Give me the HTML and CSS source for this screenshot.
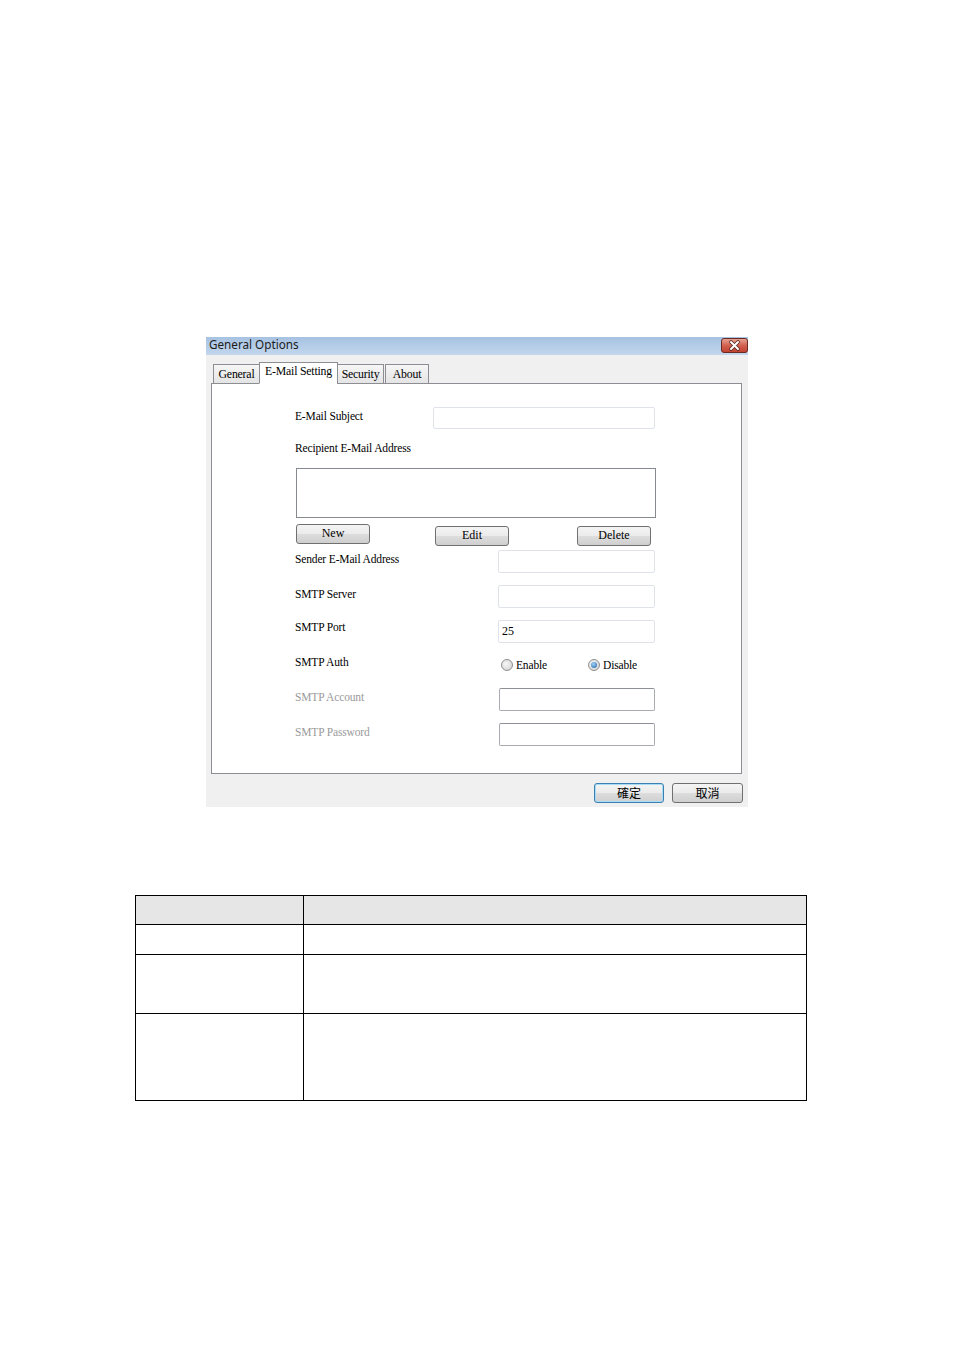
FILE: index.html
```html
<!DOCTYPE html>
<html>
<head>
<meta charset="utf-8">
<link rel="stylesheet" href="styles.css">
</head>
<body>
<div class="page">
  <div class="dialog">
    <div class="titlebar">
      <span class="title">General Options</span>
      <span class="close">
        <svg width="27" height="15" viewBox="0 0 27 15">
          <defs>
            <linearGradient id="cg" x1="0" y1="0" x2="0" y2="1">
              <stop offset="0" stop-color="#e8a898"/>
              <stop offset="0.5" stop-color="#d2604f"/>
              <stop offset="1" stop-color="#c0412f"/>
            </linearGradient>
          </defs>
          <rect x="0.5" y="0.5" width="26" height="14" rx="2.5" fill="url(#cg)" stroke="#6b2b24"/>
          <path d="M10 4 L17 11 M17 4 L10 11" stroke="#5a2a24" stroke-width="3.6" stroke-linecap="round"/>
          <path d="M10 4 L17 11 M17 4 L10 11" stroke="#ffffff" stroke-width="2" stroke-linecap="round"/>
        </svg>
      </span>
    </div>
    <div class="tabs">
      <span class="tab tab-general">General</span>
      <span class="tab active tab-email">E-Mail Setting</span>
      <span class="tab tab-security">Security</span>
      <span class="tab tab-about">About</span>
    </div>
    <div class="panel">
      <div class="row row-subject">
        <span class="lbl lbl-short">E-Mail Subject</span>
        <span class="input input-wide"></span>
      </div>
      <div class="lbl lbl-block">Recipient E-Mail Address</div>
      <div class="listbox"></div>
      <div class="btnrow">
        <span class="btn btn-new">New</span>
        <span class="btn btn-edit">Edit</span>
        <span class="btn btn-del">Delete</span>
      </div>
      <div class="row row-sender">
        <span class="lbl lbl-long">Sender E-Mail Address</span>
        <span class="input input-narrow"></span>
      </div>
      <div class="row row-gap">
        <span class="lbl lbl-long">SMTP Server</span>
        <span class="input input-narrow"></span>
      </div>
      <div class="row row-gap">
        <span class="lbl lbl-long lbl-port">SMTP Port</span>
        <span class="input input-narrow">25</span>
      </div>
      <div class="row row-auth">
        <span class="lbl lbl-long lbl-auth">SMTP Auth</span>
        <span class="radios">
          <span class="radio-item"><span class="radio"></span>Enable</span>
          <span class="radio-item"><span class="radio checked"></span>Disable</span>
        </span>
      </div>
      <div class="row row-acct">
        <span class="lbl lbl-long lbl-dis">SMTP Account</span>
        <span class="input input-narrow input-dark input-acct"></span>
      </div>
      <div class="row row-gap">
        <span class="lbl lbl-long lbl-dis">SMTP Password</span>
        <span class="input input-narrow input-dark input-acct"></span>
      </div>
    </div>
    <div class="footer">
      <span class="dbtn dbtn-ok">確定</span>
      <span class="dbtn">取消</span>
    </div>
  </div>

  <div class="tbl">
    <div class="cell head"></div><div class="cell head"></div>
    <div class="cell r1"></div><div class="cell r1"></div>
    <div class="cell r2"></div><div class="cell r2"></div>
    <div class="cell r3"></div><div class="cell r3"></div>
  </div>
</div>
</body>
</html>
```

FILE: styles.css
```css
html, body {
  margin: 0;
  padding: 0;
  background: #ffffff;
}

.page {
  padding-top: 337px;
  width: 955px;
}

.dialog {
  margin-left: 206px;
  width: 542px;
  height: 470px;
  background: #f0f0f0;
  display: flex;
  flex-direction: column;
}

.titlebar {
  height: 18px;
  background: linear-gradient(#a6c2e2, #c3d7ed);
  display: flex;
  align-items: flex-start;
  justify-content: space-between;
  padding-left: 3px;
}

.title {
  font-family: "Noto Sans", "Open Sans", sans-serif;
  font-size: 11.7px;
  color: #1b1b1b;
  line-height: 15px;
}

.close {
  display: flex;
  margin-top: 1px;
}

.tabs {
  height: 29px;
  display: flex;
  align-items: flex-end;
  padding-left: 7px;
  position: relative;
  z-index: 1;
  margin-bottom: -1px;
}

.tab {
  box-sizing: border-box;
  font-family: "Liberation Serif", "Times New Roman", serif;
  font-size: 11.8px;
  letter-spacing: -0.2px;
  color: #000;
  height: 20px;
  line-height: 19px;
  text-align: center;
  border: 1px solid #8c8e94;
  background: linear-gradient(#f6f6f6, #e4e4e4);
  margin-right: -1px;
  white-space: nowrap;
}

.tab-general { width: 47px; }
.tab-email { width: 79px; }
.tab-security { width: 47px; margin-right: 1px; }
.tab-about { width: 44px; }

.tab.active {
  height: 22px;
  line-height: 17px;
  background: #ffffff;
  border-bottom-color: #ffffff;
}

.panel {
  box-sizing: border-box;
  margin-left: 5px;
  width: 531px;
  height: 391px;
  border: 1px solid #8c8e94;
  background: #ffffff;
  padding-top: 23px;
  padding-left: 83px;
  display: flex;
  flex-direction: column;
  align-items: flex-start;
}

.lbl {
  font-family: "Liberation Serif", "Times New Roman", serif;
  font-size: 11.5px;
  letter-spacing: -0.15px;
  line-height: 14px;
  color: #000;
  white-space: nowrap;
}

.lbl-dis {
  color: #9a9a9a;
}

.row {
  display: flex;
  align-items: flex-start;
}

.row-subject {
  height: 22px;
}

.lbl-short {
  width: 138px;
  padding-top: 2px;
}

.lbl-long {
  width: 203px;
  padding-top: 2px;
}

.lbl-port {
  padding-top: 0;
}

.lbl-auth {
  padding-top: 0;
}

.input {
  box-sizing: border-box;
  height: 22px;
  border: 1px solid #dfe3e9;
  border-radius: 2px;
  background: #fff;
  font-family: "Liberation Serif", "Times New Roman", serif;
  font-size: 12px;
  line-height: 20px;
  padding-left: 3px;
  color: #000;
}

.input-wide {
  width: 222px;
}

.input-narrow {
  width: 157px;
  height: 23px;
}

.input-acct {
  margin-left: 1px;
  width: 156px;
}

.input-dark {
  border-color: #a9abb0;
  border-top-color: #8d9096;
}

.lbl-block {
  margin-top: 12px;
}

.listbox {
  margin-top: 13px;
  margin-left: 1px;
  width: 360px;
  height: 50px;
  box-sizing: border-box;
  border: 1px solid #868a90;
  background: #fff;
}

.btnrow {
  margin-top: 6px;
  margin-left: 1px;
  display: flex;
  align-items: flex-start;
  height: 22px;
}

.btn {
  box-sizing: border-box;
  width: 74px;
  height: 20px;
  border: 1px solid #707070;
  border-radius: 3px;
  background: linear-gradient(#f4f4f4 0%, #ebebeb 50%, #dddddd 51%, #cfcfcf 100%);
  font-family: "Liberation Serif", "Times New Roman", serif;
  font-size: 12px;
  line-height: 17px;
  text-align: center;
  color: #000;
}

.btn-edit {
  margin-left: 65px;
  margin-top: 2px;
}

.btn-del {
  margin-left: 68px;
  margin-top: 2px;
}

.row-sender {
  margin-top: 4px;
  height: 23px;
}

.row-gap {
  margin-top: 12px;
  height: 23px;
}

.row-auth {
  margin-top: 12px;
  height: 20px;
}

.row-acct {
  margin-top: 13px;
  height: 23px;
}

.radios {
  display: flex;
  align-items: center;
  padding-top: 3px;
  margin-left: 3px;
}

.radio-item {
  display: flex;
  align-items: center;
  font-family: "Liberation Serif", "Times New Roman", serif;
  font-size: 11.5px;
  letter-spacing: -0.15px;
  line-height: 14px;
  color: #000;
  width: 87px;
}

.radio {
  box-sizing: border-box;
  width: 12px;
  height: 12px;
  border-radius: 50%;
  border: 1px solid #8e8f8f;
  background: radial-gradient(circle at 40% 40%, #f7f7f7, #cdcdcd);
  margin-right: 3px;
  display: flex;
  align-items: center;
  justify-content: center;
}

.radio.checked::after {
  content: "";
  width: 6px;
  height: 6px;
  border-radius: 50%;
  background: radial-gradient(circle at 40% 35%, #9fd3f7, #1b5fa8);
}

.footer {
  flex: 1;
  display: flex;
  justify-content: flex-end;
  align-items: flex-start;
  padding-top: 9px;
  padding-right: 5px;
  gap: 8px;
}

.dbtn {
  box-sizing: border-box;
  width: 71px;
  height: 20px;
  border: 1px solid #707070;
  border-radius: 3px;
  background: linear-gradient(#f4f4f4 0%, #ebebeb 50%, #dddddd 51%, #cfcfcf 100%);
  font-family: "Noto Sans CJK TC", "Noto Sans CJK SC", sans-serif;
  font-size: 12px;
  line-height: 17px;
  text-align: center;
  color: #000;
}

.dbtn-ok {
  width: 70px;
  border-color: #3c7fb1;
  box-shadow: inset 0 0 0 1px #a6dcf5;
}

.tbl {
  margin-top: 88px;
  margin-left: 135px;
  display: grid;
  grid-template-columns: 168px 503px;
  width: 672px;
  border-top: 1px solid #000;
  border-left: 1px solid #000;
  box-sizing: border-box;
}

.cell {
  border-right: 1px solid #000;
  border-bottom: 1px solid #000;
  box-sizing: border-box;
}

.head {
  height: 29px;
  background: #e6e6e6;
}

.r1 {
  height: 30px;
}

.r2 {
  height: 59px;
}

.r3 {
  height: 87px;
}
```
